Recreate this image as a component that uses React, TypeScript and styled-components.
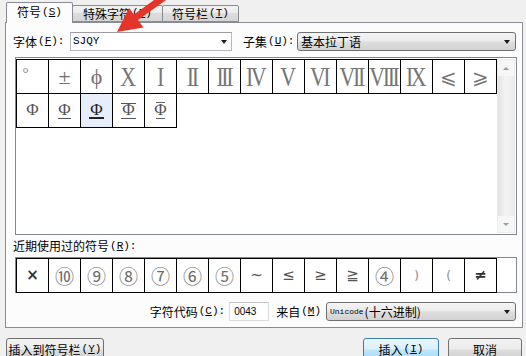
import React from 'react'
import styled, { createGlobalStyle, css } from 'styled-components'

const GlobalStyle = createGlobalStyle`
  html, body {
    margin: 0;
    padding: 0;
    background: #f0f0f0;
  }
  body {
    font-family: "Noto Sans CJK SC", "Liberation Sans", sans-serif;
    font-size: 12px;
    line-height: 1;
    color: #000;
  }
`

type GlyphKind = 'roman' | 'serif' | 'degree' | 'math' | 'circled' | 'plain' | 'bold' | 'paren'
type Bars = 'none' | 'bottom' | 'bold' | 'both' | 'ticks'

type Sym = { ch: string; kind: GlyphKind }

const topRow: Sym[] = [
  { ch: '°', kind: 'degree' },
  { ch: '±', kind: 'serif' },
  { ch: 'ϕ', kind: 'serif' },
  { ch: 'X', kind: 'roman' },
  { ch: 'I', kind: 'roman' },
  { ch: 'II', kind: 'roman' },
  { ch: 'III', kind: 'roman' },
  { ch: 'IV', kind: 'roman' },
  { ch: 'V', kind: 'roman' },
  { ch: 'VI', kind: 'roman' },
  { ch: 'VII', kind: 'roman' },
  { ch: 'VIII', kind: 'roman' },
  { ch: 'IX', kind: 'roman' },
  { ch: '⩽', kind: 'math' },
  { ch: '⩾', kind: 'math' },
]

const rebars: Bars[] = ['none', 'bottom', 'bold', 'both', 'ticks']

const recent: Sym[] = [
  { ch: '×', kind: 'bold' },
  { ch: '⑩', kind: 'circled' },
  { ch: '⑨', kind: 'circled' },
  { ch: '⑧', kind: 'circled' },
  { ch: '⑦', kind: 'circled' },
  { ch: '⑥', kind: 'circled' },
  { ch: '⑤', kind: 'circled' },
  { ch: '~', kind: 'plain' },
  { ch: '≤', kind: 'plain' },
  { ch: '≥', kind: 'plain' },
  { ch: '≧', kind: 'plain' },
  { ch: '④', kind: 'circled' },
  { ch: ')', kind: 'paren' },
  { ch: '(', kind: 'paren' },
  { ch: '≠', kind: 'bold' },
]

const Label = ({ text, k, colon = true }: { text: string; k: string; colon?: boolean }) => (
  <LabelText>
    {text}
    <Mnemonic>
      (<u>{k}</u>){colon ? ':' : ''}
    </Mnemonic>
  </LabelText>
)

const App = () => {
  return (
    <Root>
      <GlobalStyle />
      <TabStrip>
        <Tab $active $width={67}>
          <Label text="符号" k="S" colon={false} />
        </Tab>
        <Tab $width={91}>
          <Label text="特殊字符" k="P" colon={false} />
        </Tab>
        <Tab $width={77}>
          <Label text="符号栏" k="T" colon={false} />
        </Tab>
      </TabStrip>

      <Panel>
        <FontRow>
          <FieldLabel $width={57}>
            <Label text="字体" k="F" />
          </FieldLabel>
          <EditCombo>
            <ComboValue $mono>SJQY</ComboValue>
            <DropArrow />
          </EditCombo>
          <FieldLabel $width={54} $gap={11}>
            <Label text="子集" k="U" />
          </FieldLabel>
          <ListCombo $grow>
            <ComboValue>基本拉丁语</ComboValue>
            <DropArrow />
          </ListCombo>
        </FontRow>

        <SymbolBox>
          <CellGrid>
            {topRow.map((s, i) => (
              <Cell key={i}>
                <Glyph $kind={s.kind}>{s.ch}</Glyph>
              </Cell>
            ))}
            {rebars.map((b, i) => (
              <Cell key={'r' + i} $selected={i === 2}>
                <Rebar $bars={b}>Φ</Rebar>
              </Cell>
            ))}
          </CellGrid>
          <ScrollBar>
            <ScrollArrow $dir="up" />
            <ScrollArrow $dir="down" />
          </ScrollBar>
        </SymbolBox>

        <SectionLabel>
          <Label text="近期使用过的符号" k="R" />
        </SectionLabel>

        <RecentBox>
          {recent.map((s, i) => (
            <Cell key={i}>
              <Glyph $kind={s.kind}>{s.ch}</Glyph>
            </Cell>
          ))}
        </RecentBox>

        <CodeRow>
          <Label text="字符代码" k="C" />
          <CodeInput>0043</CodeInput>
          <FieldLabel $gap={7}>
            <Label text="来自" k="M" colon={false} />
          </FieldLabel>
          <ListCombo $width={190} $gap={5}>
            <ComboValue>
              <SmallMono>Unicode</SmallMono>(十六进制)
            </ComboValue>
            <DropArrow />
          </ListCombo>
        </CodeRow>
      </Panel>

      <ButtonRow>
        <Button $width={98}>
          <Label text="插入到符号栏" k="Y" colon={false} />
        </Button>
        <ButtonGroup>
          <Button $width={76} $default>
            <Label text="插入" k="I" colon={false} />
          </Button>
          <Button $width={74}>取消</Button>
        </ButtonGroup>
      </ButtonRow>

      <Pointer viewBox="0 0 70 40" width="70" height="40">
        <line x1="25" y1="18" x2="64" y2="-10" stroke="#e5352b" strokeWidth="7" />
        <polygon points="7,32 19,8 33.5,27.5" fill="#e5352b" />
      </Pointer>
    </Root>
  )
}

export default App

const Root = styled.div`
  position: relative;
  width: 526px;
  height: 356px;
  overflow: hidden;
  padding-top: 2px;
  box-sizing: border-box;
`

const LabelText = styled.span`
  white-space: nowrap;
  display: inline-flex;
  align-items: center;
`

const Mnemonic = styled.span`
  font-family: "Liberation Mono", monospace;
  font-size: 11px;
  margin-left: 1px;
`

const TabStrip = styled.div`
  display: flex;
  align-items: flex-end;
  height: 21px;
  padding-left: 6px;
  position: relative;
  z-index: 1;
  margin-bottom: -1px;
`

const Tab = styled.div<{ $active?: boolean; $width: number }>`
  width: ${p => p.$width}px;
  box-sizing: border-box;
  display: flex;
  align-items: center;
  justify-content: center;
  border: 1px solid #898c95;
  border-radius: 2px 2px 0 0;
  margin-left: -1px;
  &:first-child {
    margin-left: 0;
  }
  ${p =>
    p.$active
      ? css`
          height: 21px;
          border-bottom: none;
          background: #fcfcfc;
          padding-bottom: 2px;
          position: relative;
          z-index: 2;
        `
      : css`
          height: 17px;
          margin-bottom: 1px;
          background: linear-gradient(#f3f3f3, #ebebeb 45%, #dcdcdc 50%, #d6d6d6);
        `}
`

const Panel = styled.div`
  margin: 0 3px 0 5px;
  height: 306px;
  box-sizing: border-box;
  border: 1px solid #898c95;
  background: #fcfcfc;
  padding: 9px 5px 0 7px;
  display: flex;
  flex-direction: column;
`

const FontRow = styled.div`
  display: flex;
  align-items: center;
  height: 19px;
`

const FieldLabel = styled.div<{ $width?: number; $gap?: number }>`
  ${p => (p.$width ? `width: ${p.$width}px;` : '')}
  margin-left: ${p => p.$gap ?? 0}px;
  flex-shrink: 0;
  display: flex;
  align-items: center;
`

const EditCombo = styled.div`
  width: 162px;
  height: 19px;
  box-sizing: border-box;
  border: 1px solid #b5b8be;
  border-top-color: #9a9da3;
  background: #fff;
  display: flex;
  align-items: center;
  justify-content: space-between;
  padding: 0 4px 0 2px;
`

const ListCombo = styled.div<{ $grow?: boolean; $width?: number; $gap?: number }>`
  ${p => (p.$grow ? 'flex: 1; margin-right: 1px;' : `width: ${p.$width}px;`)}
  margin-left: ${p => p.$gap ?? 0}px;
  height: 19px;
  box-sizing: border-box;
  border: 1px solid #707070;
  border-radius: 3px;
  background: linear-gradient(#f4f4f4, #ebebeb 48%, #dedede 52%, #d2d2d2);
  display: flex;
  align-items: center;
  justify-content: space-between;
  padding: 0 5px 0 3px;
`

const ComboValue = styled.span<{ $mono?: boolean }>`
  display: inline-flex;
  align-items: center;
  ${p =>
    p.$mono &&
    css`
      font-family: "Liberation Mono", monospace;
      font-size: 11px;
    `}
`

const SmallMono = styled.span`
  font-family: "Liberation Mono", monospace;
  font-size: 8px;
  margin-right: 1px;
`

const DropArrow = styled.span`
  width: 0;
  height: 0;
  border-left: 3.5px solid transparent;
  border-right: 3.5px solid transparent;
  border-top: 4px solid #1a1a1a;
`

const SymbolBox = styled.div`
  margin: 6px 0 0 2px;
  height: 178px;
  box-sizing: border-box;
  border: 1px solid #828790;
  background: #fff;
  display: flex;
`

const CellGrid = styled.div`
  flex: 1;
  display: grid;
  grid-template-columns: repeat(15, 32px);
  grid-auto-rows: 34px;
  align-content: start;
  padding: 2px 0 0 1px;
`

const Cell = styled.div<{ $selected?: boolean }>`
  margin: -1px 0 0 -1px;
  border: 1px solid #000;
  background: ${p => (p.$selected ? '#e6eefb' : '#fff')};
  display: flex;
  align-items: center;
  justify-content: center;
  overflow: hidden;
  position: relative;
`

const glyphStyles: Record<GlyphKind, ReturnType<typeof css>> = {
  roman: css`
    font-family: "Liberation Serif", serif;
    font-size: 28px;
    letter-spacing: -3px;
    padding-right: 3px;
    transform: scaleX(0.78);
    color: #767676;
  `,
  serif: css`
    font-family: "Liberation Serif", "DejaVu Serif", serif;
    font-size: 22px;
    color: #707070;
  `,
  degree: css`
    font-family: "Liberation Serif", serif;
    font-size: 15px;
    color: #777;
    align-self: flex-start;
    margin: 6px 14px 0 0;
  `,
  math: css`
    font-family: "DejaVu Sans", sans-serif;
    font-size: 20px;
    color: #777;
  `,
  circled: css`
    font-family: "Noto Sans CJK SC", sans-serif;
    font-size: 19px;
    color: #6c6c6c;
  `,
  plain: css`
    font-family: "DejaVu Sans", sans-serif;
    font-size: 15px;
    color: #555;
  `,
  bold: css`
    font-family: "DejaVu Sans", sans-serif;
    font-size: 15px;
    font-weight: bold;
    color: #333;
  `,
  paren: css`
    font-family: "DejaVu Sans", sans-serif;
    font-size: 12px;
    color: #888;
  `,
}

const Glyph = styled.span<{ $kind: GlyphKind }>`
  line-height: 1;
  ${p => glyphStyles[p.$kind]}
`

const barStyles: Record<Bars, ReturnType<typeof css>> = {
  none: css``,
  bottom: css`
    &::after {
      content: '';
      position: absolute;
      left: 1px;
      right: 1px;
      bottom: 2px;
      height: 1px;
      background: #555;
    }
  `,
  bold: css`
    color: #222;
    &::after {
      content: '';
      position: absolute;
      left: 0;
      right: 0;
      bottom: 2px;
      height: 2px;
      background: #222;
    }
  `,
  both: css`
    &::before,
    &::after {
      content: '';
      position: absolute;
      left: 0;
      right: 0;
      height: 1px;
      background: #555;
    }
    &::before {
      top: 3px;
    }
    &::after {
      bottom: 2px;
    }
  `,
  ticks: css`
    &::before,
    &::after {
      content: '';
      position: absolute;
      left: 3px;
      right: 3px;
      height: 1px;
      background: #666;
    }
    &::before {
      top: 2px;
    }
    &::after {
      bottom: 2px;
    }
  `,
}

const Rebar = styled.span<{ $bars: Bars }>`
  position: relative;
  font-family: "Liberation Serif", serif;
  font-size: 17px;
  line-height: 1;
  padding: 1px 1px 3px;
  color: #555;
  ${p => barStyles[p.$bars]}
`

const ScrollBar = styled.div`
  width: 17px;
  margin: 1px 1px 1px 0;
  display: flex;
  flex-direction: column;
  justify-content: space-between;
  background: linear-gradient(to right, #e2e2e2, #f3f3f3 45%, #ececec);
  border: 1px solid #ececec;
`

const ScrollArrow = styled.div<{ $dir: 'up' | 'down' }>`
  height: 16px;
  display: flex;
  align-items: center;
  justify-content: center;
  background: #f6f6f6;
  &::before {
    content: '';
    width: 0;
    height: 0;
    border-left: 3px solid transparent;
    border-right: 3px solid transparent;
    ${p =>
      p.$dir === 'up'
        ? 'border-bottom: 3px solid #9a9a9a;'
        : 'border-top: 3px solid #9a9a9a;'}
  }
`

const SectionLabel = styled.div`
  margin-top: 5px;
  height: 12px;
  display: flex;
  align-items: center;
`

const RecentBox = styled.div`
  margin: 5px 0 0 2px;
  height: 36px;
  box-sizing: border-box;
  border: 1px solid #828790;
  background: #fff;
  display: grid;
  grid-template-columns: repeat(15, 32px);
  grid-template-rows: 34px;
  padding: 1px 0 0 1px;
`

const CodeRow = styled.div`
  margin-top: 9px;
  height: 19px;
  display: flex;
  align-items: center;
  justify-content: flex-end;
  padding-right: 1px;
`

const CodeInput = styled.div`
  width: 40px;
  height: 19px;
  box-sizing: border-box;
  margin-left: 4px;
  border: 1px solid #dcdcdc;
  border-top-color: #c4c4c4;
  background: #fff;
  display: flex;
  align-items: center;
  padding-left: 4px;
  font-family: "Liberation Sans", sans-serif;
  font-size: 10px;
`

const ButtonRow = styled.div`
  margin-top: 10px;
  display: flex;
  justify-content: space-between;
  padding: 0 4px 0 6px;
`

const ButtonGroup = styled.div`
  display: flex;
  gap: 9px;
`

const Button = styled.div<{ $width: number; $default?: boolean }>`
  width: ${p => p.$width}px;
  height: 23px;
  box-sizing: border-box;
  border-radius: 3px;
  display: flex;
  align-items: center;
  justify-content: center;
  ${p =>
    p.$default
      ? css`
          border: 1px solid #3c7fb1;
          background: linear-gradient(#eaf6fd, #d9f0fc 48%, #bee6fd 52%, #a7d9f5);
        `
      : css`
          border: 1px solid #707070;
          background: linear-gradient(#f2f2f2, #ebebeb 48%, #dddddd 52%, #cfcfcf);
        `}
`

const Pointer = styled.svg`
  position: absolute;
  left: 110px;
  top: 0;
  z-index: 10;
  overflow: visible;
`
